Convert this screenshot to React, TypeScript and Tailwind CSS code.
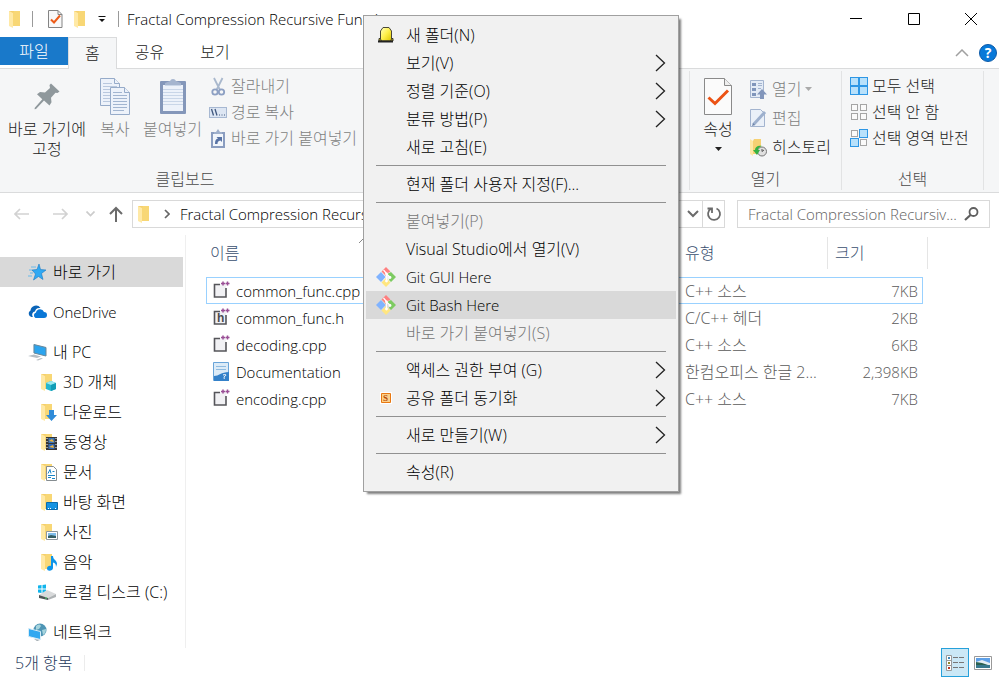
import type { ReactNode } from "react";

const TITLE = "Fractal Compression Recursive Function";

function Folder({ children }: { children?: ReactNode }) {
  return (
    <svg width="18" height="18" viewBox="0 0 18 18" className="shrink-0" aria-hidden="true">
      <path d="M1 1h11v15H1z" fill="#f5cf6b" />
      <path d="M1 1l4 2v15l-4-2z" fill="#ffe9a6" />
      <path d="M5 3l1-2h6v15H5z" fill="#f8d775" />
      {children}
    </svg>
  );
}

function CheckDoc({ size }: { size: "small" | "large" }) {
  return size === "small" ? (
    <svg width="16" height="18" viewBox="0 0 16 18" aria-hidden="true">
      <path d="M1.500.5h9.500l4 4v13H1.500z" fill="#f8f8f8" stroke="#848484" />
      <path d="M11 .5v4h4" fill="none" stroke="#848484" />
      <path d="M4 9.500l3 3 6-7" fill="none" stroke="#ec5b18" strokeWidth="2" />
    </svg>
  ) : (
    <svg width="28" height="37" viewBox="0 0 28 37" aria-hidden="true">
      <path d="M.5.5h20l7 7v29H.5z" fill="#fbfbfb" stroke="#8a8a8a" />
      <path d="M20.500.5v7h7" fill="#eee" stroke="#8a8a8a" />
      <path d="M4.500 19.500l6.500 6 13-13" fill="none" stroke="#ec5315" strokeWidth="3" />
    </svg>
  );
}

function PinIcon() {
  return (
    <svg width="28" height="37" viewBox="0 0 28 37" aria-hidden="true">
      <path d="M18 5.500l8.500 8-2 1.500-2-.3-4.500 5 .5 4.500-2 3.300-5.500-5L3 31l-1.500.3.3-1.500 7.500-8.500-5.300-5 3-2.300 5 .5 5-4.500L16.500 7z" fill="#8f989c" />
    </svg>
  );
}

function CopyIcon() {
  return (
    <svg width="30" height="37" viewBox="0 0 30 37" aria-hidden="true">
      <g stroke="#96abc9" fill="#edf2fa">
        <path d="M.5.5h14l5 5v22H.5z" />
        <path d="M14.500.5v5h5" />
        <path d="M3 5.500h9M3 8.500h14M3 11.500h14M3 14.500h14M3 17.500h14M3 20.500h14M3 23.500h14" stroke="#b9c8de" />
        <path d="M10.500 9.500h14l5 5v22h-19z" />
        <path d="M24.500 9.500v5h5" />
        <path d="M13 14.500h9M13 17.500h14M13 20.500h14M13 23.500h14M13 26.500h14M13 29.500h14M13 32.500h11" stroke="#a2b5d0" />
      </g>
    </svg>
  );
}

function PasteIcon() {
  return (
    <svg width="28" height="38" viewBox="0 0 28 38" aria-hidden="true">
      <rect x="1" y="4" width="26" height="33" rx="1" fill="#8497ba" />
      <path d="M4 8h20v26H4z" fill="#edf2fa" />
      <path d="M4 12.500h20M4 15.500h20M4 18.500h20M4 21.500h20M4 24.500h20M4 27.500h20" stroke="#c9d6e8" />
      <path d="M6 9V6l5-2a3.200 3.200 0 0 1 6 0l5 2v3z" fill="#a5b5cf" />
      <path d="M6 8.500h16" stroke="#cbd7e8" />
    </svg>
  );
}

function CutIcon() {
  return (
    <svg width="18" height="19" viewBox="0 0 18 19" aria-hidden="true">
      <path d="M5 1l6 12M13.500 1l-6 12" stroke="#a9b8cd" strokeWidth="1.800" fill="none" />
      <circle cx="6" cy="15" r="2.700" fill="none" stroke="#8da0c3" strokeWidth="1.800" />
      <circle cx="12.500" cy="15" r="2.700" fill="none" stroke="#8da0c3" strokeWidth="1.800" />
    </svg>
  );
}

function PathIcon() {
  return (
    <svg width="18" height="19" viewBox="0 0 18 19" aria-hidden="true">
      <rect x=".5" y="4.500" width="17" height="10" fill="#dde6f3" stroke="#a7b8d2" />
      <path d="M2.500 6l2 6.500M6 6l2 6.500" stroke="#41587f" strokeWidth="1.300" />
      <path d="M10 12h1M12.500 12h1M15 12h1" stroke="#41587f" />
    </svg>
  );
}

function PasteShortcutIcon() {
  return (
    <svg width="18" height="19" viewBox="0 0 18 19" aria-hidden="true">
      <path d="M2 3h14v16H2z" fill="#8a9dc0" />
      <path d="M4 5h10v12H4z" fill="#f2f6fb" />
      <path d="M5 3h2l2-3 2 3h2v2H5z" fill="#9fb0cc" />
      <path d="M6 15c0-4 1-5 3-5.500L7.500 8H13v5l-1.500-1.500C9 12 8.500 13 8.500 15z" fill="#5873a5" />
    </svg>
  );
}

function OpenIcon() {
  return (
    <svg width="17" height="19" viewBox="0 0 17 19" aria-hidden="true">
      <path d="M.5.500h13v17H.5z" fill="#e3ebf6" stroke="#a3b4cf" />
      <path d="M2 3h4v3H2zM2 8h4v3H2zM2 13h4v3H2z" fill="#7f95bb" />
      <path d="M8 3.500h4M8 5.500h4M8 8.500h3" stroke="#a3b4cf" />
      <path d="M12 9l5 5.500h-3V19h-4v-4.500H7z" fill="#8296bb" />
    </svg>
  );
}

function EditIcon() {
  return (
    <svg width="17" height="19" viewBox="0 0 17 19" aria-hidden="true">
      <path d="M.5.500h10l4 4v13H.5z" fill="#eaf0f8" stroke="#a3b4cf" />
      <path d="M3.500 15.500L15 3" stroke="#9db0cd" strokeWidth="3" />
      <path d="M2 17l1-3 2 2z" fill="#6b81a8" />
    </svg>
  );
}

function HistoryIcon() {
  return (
    <svg width="17" height="19" viewBox="0 0 17 19" aria-hidden="true">
      <path d="M0 1l3 2v15l-3-2z" fill="#ffe9a6" />
      <path d="M3 3l1-2h7v15H3z" fill="#f6d173" />
      <circle cx="12" cy="13.500" r="4.500" fill="#e0e0e0" stroke="#777" />
      <path d="M12 11v2.500l2-1.500" fill="none" stroke="#555" />
      <path d="M12 8C8 7 5 9 5 12H3l4 5 3-5H8c0-2 1-3 4-4z" fill="#35b143" />
    </svg>
  );
}

type Cell = readonly [number, number, boolean];

function GridIcon({ cells }: { cells: readonly Cell[] }) {
  return (
    <svg width="18" height="18" viewBox="0 0 18 18" aria-hidden="true">
      {cells.map(([x, y, on]) =>
        on ? (
          <rect key={`${x}-${y}`} x={x + 0.5} y={y + 0.5} width="8" height="8" fill="#b8e1fb" stroke="#2e97e5" />
        ) : (
          <rect key={`${x}-${y}`} x={x + 1.5} y={y + 1.5} width="6" height="6" fill="#fafafa" stroke="#a5a5a5" />
        )
      )}
    </svg>
  );
}

const allCells: Cell[] = [[0, 0, true], [9, 0, true], [0, 9, true], [9, 9, true]];
const noCells: Cell[] = [[0, 0, false], [9, 0, false], [0, 9, false], [9, 9, false]];
const invertCells: Cell[] = [[0, 0, false], [9, 0, true], [0, 9, true], [9, 9, false]];

function StarIcon() {
  return (
    <svg width="19" height="18" viewBox="0 0 19 18" aria-hidden="true">
      <path d="M11 1l1.500 5.500 5.500.5-4.500 3.500 1.500 6-4.500-3-5 3.500 2-6-3.500-4 5-.5z" fill="#2fa9f3" stroke="#1779c4" strokeWidth=".6" />
      <path d="M3 4h5M1 7h3M2 10h3M0 13h4" stroke="#68b9ea" />
    </svg>
  );
}

function CloudIcon() {
  return (
    <svg width="19" height="18" viewBox="0 0 19 18" aria-hidden="true">
      <path d="M5 14H3.500A3.500 3.500 0 0 1 2.500 7.500 5.500 5.500 0 0 1 12.500 5C9 4.500 7.500 6 7 8.500c-3 .5-3.500 3.500-2 5.500z" fill="#0a64b8" />
      <path d="M7.500 15a3 3 0 0 1 .5-5.500 4.200 4.200 0 0 1 8-.5 3 3 0 0 1 0 6z" fill="#0a77d6" />
    </svg>
  );
}

function PcIcon() {
  return (
    <svg width="19" height="18" viewBox="0 0 19 18" aria-hidden="true">
      <path d="M5 1l13 3v9L5 10z" fill="#dff2fc" />
      <path d="M6 1.500l12 3V13L6 10z" fill="#2ba4ee" stroke="#6b8798" />
      <path d="M0 13l6-1.500 7 2-4 1.500zM8 17l5-2 2 .5-5 2z" fill="#b6bec4" />
    </svg>
  );
}

function DriveIcon() {
  return (
    <svg width="20" height="18" viewBox="0 0 20 18" aria-hidden="true">
      <path d="M1 2.500l3.500-.5v3.500H1zM5.500 2L9 1.500v4H5.500zM1 6.500h3.500V10L1 9.500zM5.500 6.500H9v4l-3.500-.5z" fill="#10b4ec" />
      <path d="M2 12l8-5 9 4-8 4z" fill="#d8dadb" />
      <path d="M2 12l9 3v2l-9-2z" fill="#4d5557" />
      <path d="M11 15l8-4v3l-8 3z" fill="#aeb2b4" />
      <path d="M8 15h2" stroke="#50d66d" />
    </svg>
  );
}

function NetworkIcon() {
  return (
    <svg width="19" height="18" viewBox="0 0 19 18" aria-hidden="true">
      <circle cx="12" cy="7" r="6.500" fill="#4e95b5" />
      <path d="M8 3c2-2 4-2 5 0l-2 3-3 1zM14 7l4-1c0 3-1 5-3 6z" fill="#a6d4dd" />
      <path d="M.5 5.500l12 3v8l-12-3z" fill="#31a8f0" stroke="#d7edf8" />
      <path d="M6 16l6 1-3 1z" fill="#9aa5ab" />
    </svg>
  );
}

const objects = (
  <Folder><path d="M6 10l5-2 5 2v6l-5 2-5-2z" fill="#27b7cf" /><path d="M6 10l5 2 5-2-5-2z" fill="#9be9ef" /><path d="M11 12v6l5-2v-6z" fill="#129db6" /></Folder>
);
const downloads = (
  <Folder><path d="M9 7h5v5h3l-5.500 6L6 12h3z" fill="#2f8bd8" /></Folder>
);
const videos = (
  <Folder><path d="M6 4h11v13H6z" fill="#353535" /><path d="M8.500 5h6v5h-6z" fill="#3a75b6" /><path d="M8.500 11h6v5h-6z" fill="#2e69b8" /><path d="M9 8l3-2 2 3zM9 14l4-2 1 3z" fill="#f1b33a" /><path d="M7 5v12M16 5v12" stroke="#fff" strokeDasharray="1 2" /></Folder>
);
const documents = (
  <Folder><path d="M6.500 3.500h7l3 3v11h-10z" fill="#fff" stroke="#858c90" /><path d="M8 10.500l2-4 1 4M12.500 8.500h2M8 12.500h7M8 14.500h3M12 15.500h3" stroke="#1a86c8" fill="none" /></Folder>
);
const desktop = (
  <Folder><path d="M6.500 9.500h11v7h-11z" fill="#1593e2" stroke="#0b6cad" /><path d="M8 15.500h1M10 15.500h1M15 15.500h1" stroke="#fff" /></Folder>
);
const pictures = (
  <Folder><path d="M6.500 8.500h11v8h-11z" fill="#fff" stroke="#8f979c" /><path d="M8 10h8v5H8z" fill="#80bdea" /><path d="M8 13l3-1 5 1v2H8z" fill="#355e63" /></Folder>
);
const music = (
  <Folder><path d="M11 3h2c0 4 4 4 4 8l-1 3c0-3-1-4-3-4.500V15c0 3-6 4-6 .5 0-2 2-3 4-2.500z" fill="#0d95ea" /></Folder>
);

function CodeFileIcon({ header = false }: { header?: boolean }) {
  return (
    <svg width="18" height="19" viewBox="0 0 18 19" className="shrink-0" aria-hidden="true">
      <path d="M2 3h12v13H2z" fill="#f1f1f4" />
      <path d="M8 3.500H2.500v12.500h11.500V7" fill="none" stroke="#55555a" strokeWidth="1.600" />
      <path d="M9 2.500h4M11 .5v4M13.500 2.500h4M15.500.5v4" stroke="#9a4f96" strokeWidth="1.500" />
      {header && <text x="5" y="14" fontSize="12" fontWeight="700" fill="#4b4b4f" fontFamily="Liberation Sans, sans-serif">h</text>}
    </svg>
  );
}

function HwpIcon() {
  return (
    <svg width="18" height="19" viewBox="0 0 18 19" className="shrink-0" aria-hidden="true">
      <path d="M1.500.5h15v18h-15z" fill="#dcebf7" stroke="#69a4d8" />
      <path d="M4 4.500h10M4 7.500h10" stroke="#8fbbe0" />
      <path d="M2 14c5 0 7-4 15-4v9H2z" fill="#3481c9" />
      <path d="M11 13c3-1 4 0 2 1s0 2-1 3" stroke="#fff" fill="none" />
    </svg>
  );
}

function GitIcon() {
  return (
    <svg width="20" height="20" viewBox="0 0 20 20" aria-hidden="true">
      <path d="M10 0l4.500 4.500L12 6l-2 3-4.500-4.500z" fill="#ff8080" />
      <path d="M5 5l4.500 5L5 15 0 10z" fill="#80b3ff" />
      <path d="M15 5l5 5-5 5-2-2 1-3-3-3z" fill="#7dcb62" />
      <path d="M10 11l4.500 4.500L10 20l-4.500-4.500z" fill="#ffe680" />
      <path d="M7.500 3l3 3.500V14M10.500 7l4 3.500" stroke="#fff" strokeWidth="1.200" fill="none" />
      <circle cx="10.500" cy="7" r="1.400" fill="#fff" />
      <circle cx="10.500" cy="14" r="1.400" fill="#fff" />
      <circle cx="14" cy="10.500" r="1.400" fill="#fff" />
    </svg>
  );
}

function NewFolderIcon() {
  return (
    <svg width="16" height="18" viewBox="0 0 16 18" aria-hidden="true">
      <defs>
        <linearGradient id="gold" x1="0" y1="0" x2="1" y2="1">
          <stop offset="0" stopColor="#ffffc0" />
          <stop offset="0.5" stopColor="#fff04a" />
          <stop offset="1" stopColor="#dcc400" />
        </linearGradient>
      </defs>
      <path d="M1 15v-2.500h14V15z" fill="#c9b21c" stroke="#3a3828" />
      <path d="M2.500 13.500V5L5 1.500h6L13.500 5v8.500l-2 1.500h-7z" fill="url(#gold)" stroke="#4b4938" />
      <path d="M0 15.500h15" stroke="#222" strokeWidth="2" />
    </svg>
  );
}

function SyncIcon() {
  return (
    <svg width="12" height="12" viewBox="0 0 12 12" aria-hidden="true">
      <path d="M0 0h12v12H0z" fill="#fff" />
      <path d="M1.500 1.500h9v9h-9z" fill="#fbd08a" stroke="#e87812" />
      <text x="3" y="9" fontSize="9" fontWeight="700" fill="#b84a08" fontFamily="Liberation Serif, serif">S</text>
    </svg>
  );
}

type MenuEntry = { label: string; icon?: ReactNode; sub?: boolean; disabled?: boolean; active?: boolean; latin?: boolean };

const menuGroups: MenuEntry[][] = [
  [
    { label: "새 폴더(N)", icon: <NewFolderIcon /> },
    { label: "보기(V)", sub: true },
    { label: "정렬 기준(O)", sub: true },
    { label: "분류 방법(P)", sub: true },
    { label: "새로 고침(E)" },
  ],
  [{ label: "현재 폴더 사용자 지정(F)..." }],
  [
    { label: "붙여넣기(P)", disabled: true },
    { label: "Visual Studio에서 열기(V)" },
    { label: "Git GUI Here", icon: <GitIcon />, latin: true },
    { label: "Git Bash Here", icon: <GitIcon />, active: true, latin: true },
    { label: "바로 가기 붙여넣기(S)", disabled: true },
  ],
  [
    { label: "액세스 권한 부여 (G)", sub: true },
    { label: "공유 폴더 동기화", icon: <SyncIcon />, sub: true },
  ],
  [{ label: "새로 만들기(W)", sub: true }],
  [{ label: "속성(R)" }],
];

function ContextMenu() {
  return (
    <div role="menu" className="absolute left-[363px] top-[15px] w-[316px] border border-[#a0a0a0] bg-[#f1f1f1] px-[2px] py-[5px] shadow-[3px_3px_2px_-1px_rgba(0,0,0,0.5)]">
      {menuGroups.map((group, i) => (
        <div key={i} role="group">
          {i > 0 && <hr className="mx-[10px] my-1 border-[#919191]" />}
          {group.map((item) => (
            <button
              key={item.label}
              role="menuitem"
              disabled={item.disabled}
              className={`flex h-7 w-full items-center whitespace-nowrap pr-[10px] text-left text-black disabled:text-[#757575] ${item.active ? "bg-[#d9d9d9]" : ""}`}
            >
              <span className="flex w-10 shrink-0 items-center justify-center">{item.icon}</span>
              <span className={`flex-1 ${item.latin ? "text-[15px]" : ""}`}>{item.label}</span>
              {item.sub && (
                <svg width="11" height="18" viewBox="0 0 11 18" aria-hidden="true">
                  <path d="M1 1l8.500 8L1 17" fill="none" stroke="#222" strokeWidth="1.300" />
                </svg>
              )}
            </button>
          ))}
        </div>
      ))}
    </div>
  );
}

function TitleBar() {
  return (
    <header className="flex h-[37px] items-center overflow-hidden">
      <div className="flex flex-1 items-center overflow-hidden pl-2">
        <Folder />
        <span className="ml-[6px] h-4 w-px bg-[#9a9a9a]" />
        <button aria-label="속성" className="ml-[14px]"><CheckDoc size="small" /></button>
        <button aria-label="새 폴더" className="ml-[10px]"><Folder /></button>
        <button aria-label="빠른 실행 도구 모음" className="ml-[7px]">
          <svg width="8" height="8" viewBox="0 0 8 8" aria-hidden="true"><path d="M.5 1.500h7" stroke="#111" /><path d="M1 4h6L4 7z" fill="#111" /></svg>
        </button>
        <span className="ml-[12px] h-4 w-px bg-[#9a9a9a]" />
        <h1 className="ml-2 truncate text-[15px] text-black">{TITLE}</h1>
      </div>
      <button aria-label="최소화" className="flex h-full w-[58px] items-center justify-center">
        <svg width="12" height="12" viewBox="0 0 12 12"><path d="M0 5.500h12" stroke="#000" /></svg>
      </button>
      <button aria-label="최대화" className="flex h-full w-[58px] items-center justify-center">
        <svg width="12" height="12" viewBox="0 0 12 12"><path d="M.5.500h11v11H.5z" fill="none" stroke="#000" /></svg>
      </button>
      <button aria-label="닫기" className="flex h-full w-14 items-center justify-center">
        <svg width="12" height="12" viewBox="0 0 12 12"><path d="M0 0l12 12M12 0L0 12" stroke="#000" /></svg>
      </button>
    </header>
  );
}

function TabRow() {
  return (
    <div className="flex h-8 border-b border-[#dadbdc] text-[#222]">
      <button className="h-7 w-[68px] bg-[#1979ca] text-white">파일</button>
      <button className="-mb-px h-8 border border-b-0 border-[#dadbdc] bg-[#f5f6f7] px-4 pb-[2px]">홈</button>
      <button className="px-[18px] pb-[2px]">공유</button>
      <button className="px-[18px] pb-[2px]">보기</button>
      <div className="flex flex-1 items-center justify-end gap-[10px] pr-[2px]">
        <button aria-label="리본 최소화">
          <svg width="14" height="8" viewBox="0 0 14 8"><path d="M1 7l6-6 6 6" fill="none" stroke="#a0a0a0" strokeWidth="1.500" /></svg>
        </button>
        <button aria-label="도움말" className="flex size-[18px] items-center justify-center rounded-full border border-[#0c5aa8] bg-[#0879d9] text-sm font-bold leading-4 text-white">?</button>
      </div>
    </div>
  );
}

function Group({ label, width, children }: { label: string; width: string; children: ReactNode }) {
  return (
    <section className={`flex shrink-0 flex-col ${width}`}>
      <div className="flex flex-1 items-start">{children}</div>
      <h2 className="mb-[3px] text-center leading-5 text-[#4a4a4a]">{label}</h2>
    </section>
  );
}

function SmallButton({ icon, label, dim = false, arrow = false }: { icon: ReactNode; label: string; dim?: boolean; arrow?: boolean }) {
  return (
    <button className={`flex items-center gap-1 whitespace-nowrap leading-5 ${dim ? "text-[#7e7f81]" : "text-[#222]"}`}>
      <span className="flex h-5 w-[18px] items-center">{icon}</span>
      {label}
      {arrow && <svg width="7" height="4" viewBox="0 0 7 4"><path d="M0 0h7L3.500 4z" fill="#aaa" /></svg>}
    </button>
  );
}

function BigButton({ icon, children, width, dim = false }: { icon: ReactNode; children: ReactNode; width: string; dim?: boolean }) {
  return (
    <button className={`flex flex-col items-center pt-2 leading-5 ${width} ${dim ? "text-[#7e7f81]" : "text-[#222]"}`}>
      <span className="mb-1 flex h-[38px] items-center">{icon}</span>
      {children}
    </button>
  );
}

function Ribbon() {
  return (
    <div className="flex h-[124px] border-b border-[#dadbdc] bg-[#f5f6f7] pr-[15px]">
      <Group label="클립보드" width="w-[370px]">
        <BigButton icon={<PinIcon />} width="w-[94px]">
          <span>바로 가기에</span>
          <span>고정</span>
        </BigButton>
        <BigButton icon={<CopyIcon />} width="w-[42px]" dim>복사</BigButton>
        <BigButton icon={<PasteIcon />} width="w-[73px]" dim>붙여넣기</BigButton>
        <div className="flex flex-col gap-[6px] pt-[7px]">
          <SmallButton icon={<CutIcon />} label="잘라내기" dim />
          <SmallButton icon={<PathIcon />} label="경로 복사" dim />
          <SmallButton icon={<PasteShortcutIcon />} label="바로 가기 붙여넣기" dim />
        </div>
      </Group>
      <div className="flex-1" />
      <div className="my-[2px] w-px bg-[#e2e3e4]" />
      <Group label="열기" width="w-[151px]">
        <BigButton icon={<CheckDoc size="large" />} width="w-14">
          <span>속성</span>
          <svg width="7" height="4" viewBox="0 0 7 4" className="mt-2"><path d="M0 0h7L3.500 4z" fill="#222" /></svg>
        </BigButton>
        <div className="flex flex-col gap-[9px] pl-1 pt-[10px]">
          <SmallButton icon={<OpenIcon />} label="열기" dim arrow />
          <SmallButton icon={<EditIcon />} label="편집" dim />
          <SmallButton icon={<HistoryIcon />} label="히스토리" />
        </div>
      </Group>
      <div className="my-[2px] w-px bg-[#e2e3e4]" />
      <Group label="선택" width="w-[141px]">
        <div className="flex flex-col gap-[6px] pl-2 pt-[7px]">
          <SmallButton icon={<GridIcon cells={allCells} />} label="모두 선택" />
          <SmallButton icon={<GridIcon cells={noCells} />} label="선택 안 함" />
          <SmallButton icon={<GridIcon cells={invertCells} />} label="선택 영역 반전" />
        </div>
      </Group>
      <div className="my-[2px] w-px bg-[#e2e3e4]" />
    </div>
  );
}

function AddressRow() {
  return (
    <div className="flex h-[42px] items-center pr-[9px] text-[15px]">
      <div className="flex w-[132px] shrink-0 items-center pl-[14px]">
        <button aria-label="뒤로"><svg width="16" height="14" viewBox="0 0 16 14"><path d="M15 7H1M6 2L1 7l5 5" fill="none" stroke="#d2d2d2" strokeWidth="1.700" /></svg></button>
        <button aria-label="앞으로" className="ml-[23px]"><svg width="16" height="14" viewBox="0 0 16 14"><path d="M0 7h14M9 2l5 5-5 5" fill="none" stroke="#d2d2d2" strokeWidth="1.700" /></svg></button>
        <button aria-label="최근 위치" className="ml-[17px]"><svg width="9" height="6" viewBox="0 0 9 6"><path d="M.5.500l4 4 4-4" fill="none" stroke="#ccc" strokeWidth="1.700" /></svg></button>
        <button aria-label="위로" className="ml-[14px]"><svg width="14" height="16" viewBox="0 0 14 16"><path d="M7 16V2M1 8l6-6 6 6" fill="none" stroke="#6b6b6b" strokeWidth="2" /></svg></button>
      </div>
      <div className="flex h-7 min-w-0 flex-1 items-center border border-[#d9d9d9]">
        <span className="ml-1"><Folder /></span>
        <svg width="6" height="10" viewBox="0 0 6 10" className="ml-[9px] shrink-0"><path d="M1 1l4 4-4 4" fill="none" stroke="#666" strokeWidth="1.700" /></svg>
        <button className="ml-[10px] min-w-0 flex-1 truncate text-left text-black">{TITLE}</button>
        <button aria-label="이전 위치" className="mr-[3px] shrink-0"><svg width="12" height="8" viewBox="0 0 12 8"><path d="M1 1l5 5 5-5" fill="none" stroke="#6b6b6b" strokeWidth="2" /></svg></button>
        <button aria-label="새로 고침" className="flex h-full w-[22px] items-center justify-center border-l border-[#d9d9d9]">
          <svg width="16" height="16" viewBox="0 0 16 16"><path d="M10.500 2.500a6 6 0 1 1-5.500.3M1.500 2.500h4.500v4.500" fill="none" stroke="#6b6b6b" strokeWidth="1.800" /></svg>
        </button>
      </div>
      <label className="ml-3 flex h-7 w-[253px] items-center border border-[#d9d9d9] px-[10px]">
        <input type="text" aria-label="검색" placeholder="Fractal Compression Recursiv..." className="min-w-0 flex-1 outline-none placeholder:text-[#626262]" />
        <svg width="15" height="14" viewBox="0 0 15 14" aria-hidden="true"><circle cx="9.500" cy="5" r="4" fill="none" stroke="#5f5f5f" strokeWidth="1.800" /><path d="M6.500 8L1 13" stroke="#5f5f5f" strokeWidth="2.200" /></svg>
      </label>
    </div>
  );
}

const pcItems: [string, ReactNode][] = [
  ["3D 개체", objects],
  ["다운로드", downloads],
  ["동영상", videos],
  ["문서", documents],
  ["바탕 화면", desktop],
  ["사진", pictures],
  ["음악", music],
];

function NavItem({ icon, label, active = false, nested = false, latin = false }: { icon: ReactNode; label: string; active?: boolean; nested?: boolean; latin?: boolean }) {
  return (
    <a href="#" className={`flex h-[30px] items-center whitespace-nowrap text-black ${active ? "bg-[#d9d9d9]" : ""} ${latin ? "text-[15px]" : ""} ${nested ? "gap-[5px] pl-10" : "gap-[6px] pl-7"}`}>
      {icon}
      {label}
    </a>
  );
}

function Sidebar() {
  return (
    <nav className="flex w-[186px] shrink-0 flex-col gap-[10px] border-r border-[#efefef] pr-[2px] pt-[22px]">
      <NavItem icon={<StarIcon />} label="바로 가기" active />
      <NavItem icon={<CloudIcon />} label="OneDrive" latin />
      <div>
        <NavItem icon={<PcIcon />} label="내 PC" />
        {pcItems.map(([label, icon]) => (
          <NavItem key={label} icon={icon} label={label} nested />
        ))}
        <a href="#" className="flex h-[30px] items-center gap-[6px] whitespace-nowrap pl-[37px] text-black">
          <DriveIcon />
          로컬 디스크 (C:)
        </a>
      </div>
      <NavItem icon={<NetworkIcon />} label="네트워크" />
    </nav>
  );
}

const files = [
  { name: "common_func.cpp", type: "C++ 소스", size: "7KB", icon: <CodeFileIcon /> },
  { name: "common_func.h", type: "C/C++ 헤더", size: "2KB", icon: <CodeFileIcon header /> },
  { name: "decoding.cpp", type: "C++ 소스", size: "6KB", icon: <CodeFileIcon /> },
  { name: "Documentation", type: "한컴오피스 한글 2...", size: "2,398KB", icon: <HwpIcon /> },
  { name: "encoding.cpp", type: "C++ 소스", size: "7KB", icon: <CodeFileIcon /> },
];

function FileTable() {
  return (
    <main className="min-w-0 flex-1 pl-5">
      <table className="table-fixed border-separate border-spacing-0 whitespace-nowrap text-left">
        <colgroup>
          <col className="w-[474px]" />
          <col className="w-[148px]" />
          <col className="w-[95px]" />
          <col className="w-[5px]" />
        </colgroup>
        <thead className="text-[#3a5070]">
          <tr className="h-[42px] align-top">
            <th className="p-0 pt-[2px] font-light">
              <div className="flex h-8 items-center pl-1">
                <span className="w-[148px]">이름</span>
                <svg width="10" height="6" viewBox="0 0 10 6" className="self-start"><path d="M1 6l4-4 4 4" fill="none" stroke="#888" /></svg>
              </div>
            </th>
            <th className="p-0 pt-[2px] font-light">
              <div className="flex h-8 items-center border-r border-[#e5e5e5] pl-[5px]">유형</div>
            </th>
            <th colSpan={2} className="p-0 pt-[2px] font-light">
              <div className="flex h-8 items-center border-r border-[#e5e5e5] pl-[7px]">크기</div>
            </th>
          </tr>
        </thead>
        <tbody>
          {files.map((f, i) => {
            const edge = i === 0 ? "border-y border-[#99d1ff]" : "";
            return (
              <tr key={f.name} className="h-[27px]">
                <td className={`p-0 ${edge} ${i === 0 ? "border-l" : "pl-px"}`}>
                  <span className="flex items-center gap-[6px] pl-[5px] text-[15px] leading-5 text-black">{f.icon}{f.name}</span>
                </td>
                <td className={`p-0 pl-[5px] leading-5 text-[#5a5a5a] ${edge}`}>{f.type}</td>
                <td className={`p-0 text-right text-[15px] leading-5 text-[#5a5a5a] ${edge} ${i === 0 ? "border-r pr-1" : "pr-[5px]"}`}>{f.size}</td>
              </tr>
            );
          })}
        </tbody>
      </table>
    </main>
  );
}

function StatusBar() {
  return (
    <footer className="flex h-[29px] items-center pl-[15px] pr-[7px] text-[#1e395b]">
      <span className="border-r border-[#ececec] pr-3 leading-4">5개 항목</span>
      <div className="ml-auto flex items-center gap-[5px]">
        <button aria-label="자세히" className="flex h-[29px] w-7 items-center justify-center border border-[#26a0da] bg-[#cbe8f6]">
          <svg width="18" height="16" viewBox="0 0 18 16" aria-hidden="true">
            <path d="M.5.500h5v5h-5zM.5 5.500h5v5h-5zM.5 10.500h5v5h-5z" fill="#fff" stroke="#999" />
            <path d="M2 2h2v2H2z" fill="#3d86b8" /><path d="M2 7h2v2H2z" fill="#91862c" /><path d="M2 12h2v2H2z" fill="#c33522" />
            <path d="M7 2.500h5M13 2.500h5M7 7.500h5M13 7.500h5M7 12.500h5M13 12.500h5" stroke="#777" />
          </svg>
        </button>
        <button aria-label="큰 아이콘">
          <svg width="18" height="14" viewBox="0 0 18 14" aria-hidden="true">
            <path d="M.5.500h17v13H.5z" fill="#fff" stroke="#999" />
            <path d="M2 2h14v10H2z" fill="#5ea0e8" /><path d="M2 6l6-2 8 3v2H2z" fill="#e4eef4" /><path d="M2 6l6 1 6 2H2z" fill="#2b6150" /><path d="M2 9h14v3H2z" fill="#37788d" />
          </svg>
        </button>
      </div>
    </footer>
  );
}

export default function App() {
  return (
    <div className="relative flex min-h-screen flex-col overflow-hidden bg-white font-['Open_Sans','Noto_Sans_CJK_KR',sans-serif] text-base font-light leading-6">
      <TitleBar />
      <TabRow />
      <Ribbon />
      <AddressRow />
      <div className="flex flex-1">
        <Sidebar />
        <FileTable />
      </div>
      <StatusBar />
      <ContextMenu />
    </div>
  );
}
